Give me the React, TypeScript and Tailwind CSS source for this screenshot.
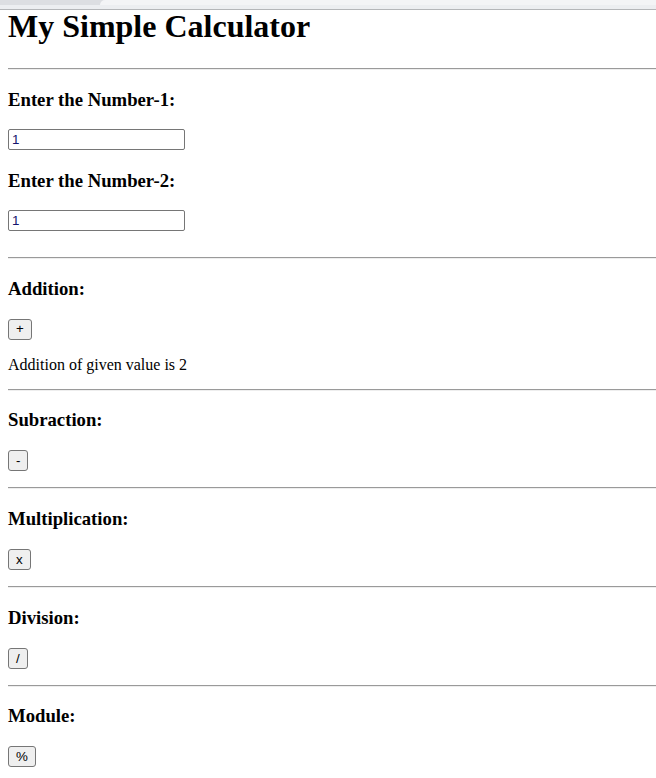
import { useState } from "react";

const serif = "font-['Liberation_Serif','Times_New_Roman',serif]";
const sans = "font-['Liberation_Sans',Arial,sans-serif]";

function Rule({ className = "" }: { className?: string }) {
  return (
    <hr
      className={`h-0 border-0 border-t border-b border-t-[#9a9a9a] border-b-[#eeeeee] ${className}`}
    />
  );
}

function OpButton({ label, onClick }: { label: string; onClick: () => void }) {
  return (
    <button
      onClick={onClick}
      className={`${sans} mt-[19px] self-start h-[21px] px-[7px] flex items-center justify-center border border-[#767676] rounded-[3px] bg-[#efefef] text-[13.33px] leading-none text-black`}
    >
      {label}
    </button>
  );
}

export default function App() {
  const [num1, setNum1] = useState("1");
  const [num2, setNum2] = useState("1");
  const [results, setResults] = useState<Record<string, string>>({
    add: "Addition of given value is 2",
  });

  const a = parseFloat(num1) || 0;
  const b = parseFloat(num2) || 0;

  const sections = [
    { key: "add", title: "Addition:", label: "+", text: () => `Addition of given value is ${a + b}` },
    { key: "sub", title: "Subraction:", label: "-", text: () => `Subraction of given value is ${a - b}` },
    { key: "mul", title: "Multiplication:", label: "x", text: () => `Multiplication of given value is ${a * b}` },
    { key: "div", title: "Division:", label: "/", text: () => `Division of given value is ${a / b}` },
    { key: "mod", title: "Module:", label: "%", text: () => `Module of given value is ${a % b}` },
  ];

  return (
    <div className={`${serif} min-h-[778px] bg-white text-black flex flex-col`}>
      {/* browser tab strip */}
      <div className="h-[10px] flex flex-col">
        <div className="h-[5px] flex bg-[#dcdee2]">
          <div className="w-[100px]" />
          <div className="flex-1 bg-[#f3f4f6] rounded-tl-[6px]" />
        </div>
        <div className="h-[4px] bg-[#eceef1]" />
        <div className="h-[1px] bg-[#b4b6b9]" />
      </div>

      <div className="pl-2 flex flex-col">
        <h1 className="text-[32px] leading-[33px] font-bold">My Simple Calculator</h1>
        <Rule className="mt-[25px]" />

        <h3 className="mt-[18.7px] text-[18.72px] leading-[22px] font-bold">Enter the Number-1:</h3>
        <input
          value={num1}
          onChange={(e) => setNum1(e.target.value)}
          className={`${sans} mt-[18.3px] w-[177px] h-[21px] px-[3px] border border-[#767676] rounded-[2px] text-[13.33px] text-[#14146e] outline-none`}
        />
        <h3 className="mt-[19.7px] text-[18.72px] leading-[22px] font-bold">Enter the Number-2:</h3>
        <input
          value={num2}
          onChange={(e) => setNum2(e.target.value)}
          className={`${sans} mt-[18.3px] w-[177px] h-[21px] px-[3px] border border-[#767676] rounded-[2px] text-[13.33px] text-[#14146e] outline-none`}
        />
        <Rule className="mt-[26px]" />

        {sections.map((s, i) => (
          <div key={s.key} className="flex flex-col">
            <h3 className="mt-[18.7px] text-[18.72px] leading-[22px] font-bold">{s.title}</h3>
            <OpButton
              label={s.label}
              onClick={() => setResults({ ...results, [s.key]: s.text() })}
            />
            {results[s.key] && (
              <p className="mt-[16px] text-[16px] leading-[18px]">{results[s.key]}</p>
            )}
            {i < sections.length - 1 && (
              <Rule className={results[s.key] ? "mt-[15px]" : "mt-[16px]"} />
            )}
          </div>
        ))}
      </div>
    </div>
  );
}
